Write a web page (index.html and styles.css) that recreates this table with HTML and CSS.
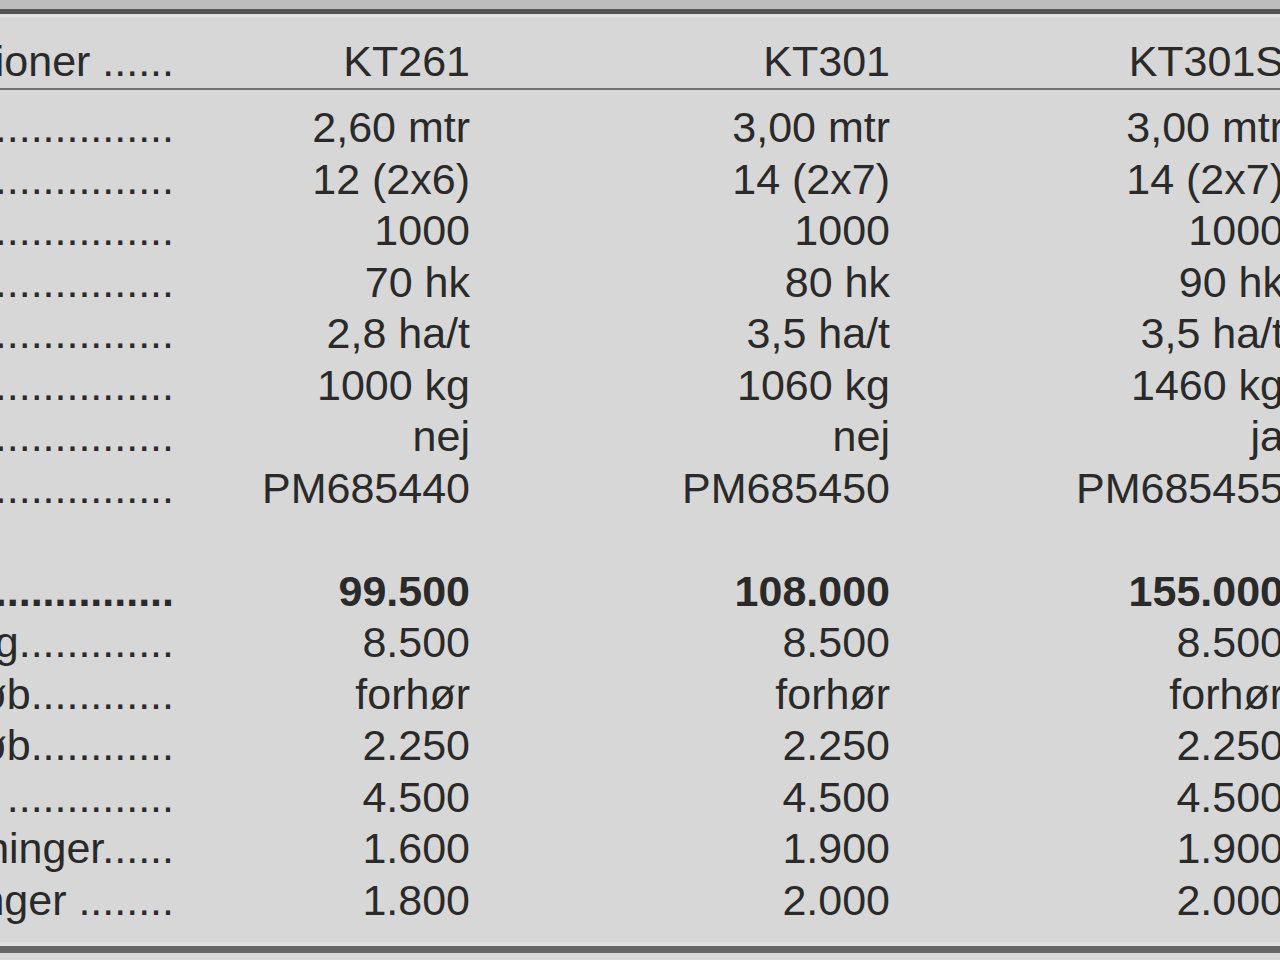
FILE: index.html
```html
<!DOCTYPE html>
<html lang="da">
<head>
<meta charset="utf-8">
<title>Specifikationer KT261 / KT301 / KT301S</title>
<link rel="stylesheet" href="styles.css">
</head>
<body>
<div class="sheet">
  <div class="edge-top"></div>
  <div class="row head">
    <div class="label"><span>Specifikationer ......</span></div>
    <div class="val">KT261</div>
    <div class="val">KT301</div>
    <div class="val">KT301S</div>
  </div>
  <div class="body">
    <div class="row">
      <div class="label"><span>Arbejdsbredde ...............</span></div>
      <div class="val">2,60 mtr</div><div class="val">3,00 mtr</div><div class="val">3,00 mtr</div>
    </div>
    <div class="row">
      <div class="label"><span>Antal rotorer ...............</span></div>
      <div class="val">12 (2x6)</div><div class="val">14 (2x7)</div><div class="val">14 (2x7)</div>
    </div>
    <div class="row">
      <div class="label"><span>Omdrejninger PTO ...............</span></div>
      <div class="val">1000</div><div class="val">1000</div><div class="val">1000</div>
    </div>
    <div class="row">
      <div class="label"><span>Kraftbehov ...............</span></div>
      <div class="val">70 hk</div><div class="val">80 hk</div><div class="val">90 hk</div>
    </div>
    <div class="row">
      <div class="label"><span>Kapacitet ...............</span></div>
      <div class="val">2,8 ha/t</div><div class="val">3,5 ha/t</div><div class="val">3,5 ha/t</div>
    </div>
    <div class="row">
      <div class="label"><span>Vægt ...............</span></div>
      <div class="val">1000 kg</div><div class="val">1060 kg</div><div class="val">1460 kg</div>
    </div>
    <div class="row">
      <div class="label"><span>Hydraulisk sammenklapning ...............</span></div>
      <div class="val">nej</div><div class="val">nej</div><div class="val">ja</div>
    </div>
    <div class="row">
      <div class="label"><span>Varenummer ...............</span></div>
      <div class="val">PM685440</div><div class="val">PM685450</div><div class="val">PM685455</div>
    </div>
    <div class="row blank">
      <div class="label"></div>
      <div class="val"></div><div class="val"></div><div class="val"></div>
    </div>
    <div class="row price">
      <div class="label"><span>Pris ekskl. moms ...............</span></div>
      <div class="val">99.500</div><div class="val">108.000</div><div class="val">155.000</div>
    </div>
    <div class="row">
      <div class="label"><span>Pakkervalse tillæg.............</span></div>
      <div class="val">8.500</div><div class="val">8.500</div><div class="val">8.500</div>
    </div>
    <div class="row">
      <div class="label"><span>Crosskillvalse tilkøb............</span></div>
      <div class="val">forhør</div><div class="val">forhør</div><div class="val">forhør</div>
    </div>
    <div class="row">
      <div class="label"><span>Sporløsner sæt tilkøb............</span></div>
      <div class="val">2.250</div><div class="val">2.250</div><div class="val">2.250</div>
    </div>
    <div class="row">
      <div class="label"><span>Hydraulisk topstang  ..............</span></div>
      <div class="val">4.500</div><div class="val">4.500</div><div class="val">4.500</div>
    </div>
    <div class="row">
      <div class="label"><span>Hurtigskift af fortænder og svingninger......</span></div>
      <div class="val">1.600</div><div class="val">1.900</div><div class="val">1.900</div>
    </div>
    <div class="row">
      <div class="label"><span>Kantplader med fjedringer ........</span></div>
      <div class="val">1.800</div><div class="val">2.000</div><div class="val">2.000</div>
    </div>
  </div>
  <div class="edge-bottom"></div>
</div>
</body>
</html>
```

FILE: styles.css
```css
html, body {
  margin: 0;
  padding: 0;
  width: 1280px;
  height: 960px;
  overflow: hidden;
  background: #8c8c8c;
}

.sheet {
  width: 1280px;
  height: 960px;
  overflow: hidden;
  background: #d7d7d7;
  font-family: "Liberation Sans", Arial, Helvetica, sans-serif;
  font-size: 43px;
  line-height: 51.5px;
  color: #2a2a2a;
  display: flex;
  flex-direction: column;
}

.edge-top {
  height: 9px;
  flex-shrink: 0;
  background: #bdbdbd;
  border-bottom: 5px solid #555555;
  box-shadow: 0 3px 0 #e2e2e2;
}

.row {
  display: grid;
  grid-template-columns: 174px 296px 420px 394px;
  width: 1284px;
  height: 51.5px;
  flex-shrink: 0;
}

.head {
  margin-top: 22.4px;
  border-bottom: 2px solid #6f6f6f;
  height: 51.5px;
  box-sizing: content-box;
}

.body {
  padding-top: 12.4px;
  display: flex;
  flex-direction: column;
  flex: 1;
  box-shadow: 0 -1px 0 #e0e0e0 inset;
}

.label {
  display: flex;
  justify-content: flex-end;
  overflow: hidden;
  white-space: pre;
}

.label span {
  flex-shrink: 0;
}

.val {
  text-align: right;
  white-space: nowrap;
}

.price {
  font-weight: bold;
}

.edge-bottom {
  height: 7px;
  flex-shrink: 0;
  background: #676767;
  border-top: 3px solid #e2e2e2;
  margin-bottom: 7px;
}
```
